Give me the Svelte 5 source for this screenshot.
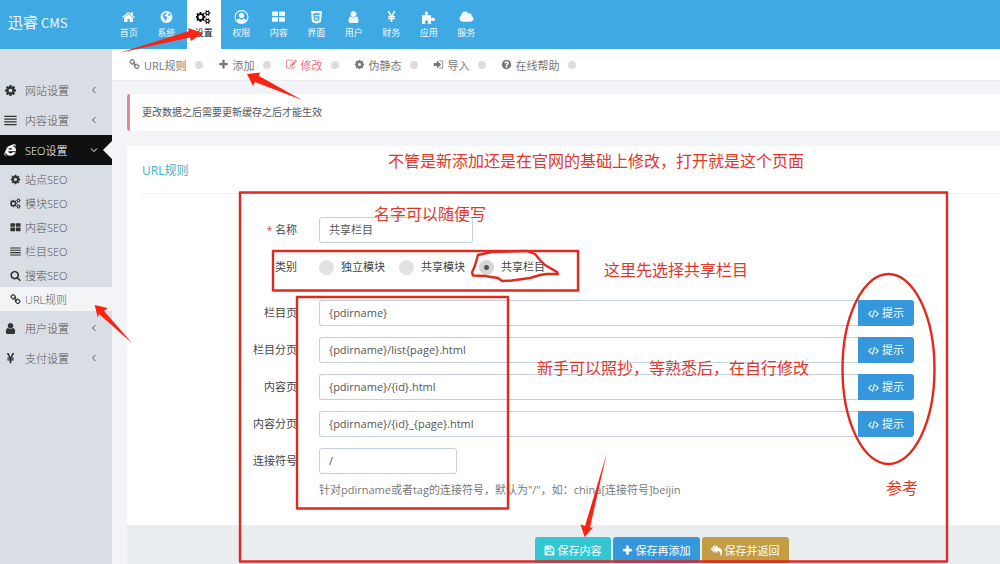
<script lang="ts">
  type Glyph = { w: number; d: string };

  const icons: Record<string, Glyph> = {
    home: {
      w: 1792,
      d: "M1472 992v480q0 26-19 45t-45 19h-384v-384h-256v384h-384q-26 0-45-19t-19-45v-480q0-1 .5-3t.5-3l575-474 575 474q1 2 1 6zm223-69l-62 74q-8 9-21 11h-3q-13 0-21-7l-692-577-692 577q-12 8-24 7-13-2-21-11l-62-74q-8-10-7-23.5t11-21.5l719-599q32-26 76-26t76 26l244 204v-195q0-14 9-23t23-9h192q14 0 23 9t9 23v408l219 182q10 8 11 21.5t-7 23.5z"
    },
    globe: {
      w: 1792,
      d: "M896 128a768 768 0 1 0 0 1536a768 768 0 1 0 0-1536zM640 380l150-60 150 20-20 130-120 60-30 110-140 30-20 110 130 20 110-10 130 100 20 130-110 90-60 160-90 110-90-120-20-170-130-150-80-190q20-220 220-370zM1200 390q190 100 250 280l-90 80-120-60-120 50-50-110 110-90z"
    },
    cogs: {
      w: 1920,
      d: "M832 896q0-106-75-181t-181-75-181 75-75 181 75 181 181 75 181-75 75-181zm768 512q0-52-38-90t-90-38-90 38-38 90q0 53 37.5 90.5t90.5 37.5 90.5-37.5 37.5-90.5zm0-1024q0-52-38-90t-90-38-90 38-38 90q0 53 37.5 90.5t90.5 37.5 90.5-37.5 37.5-90.5zm-384 421v185q0 10-7 19.5t-16 10.5l-155 24q-11 35-32 76 34 48 90 115 7 11 7 20 0 12-7 19-23 30-82.5 89.5t-78.5 59.5q-11 0-21-7l-115-90q-37 19-77 31-11 108-23 155-7 24-30 24h-186q-11 0-20-7.5t-10-17.5l-23-153q-34-10-75-31l-118 89q-7 7-20 7-11 0-21-8-144-133-144-160 0-9 7-19 10-14 41-53t47-61q-23-44-35-82l-152-24q-10-1-17-9.5t-7-19.5v-185q0-10 7-19.5t16-10.5l155-24q11-35 32-76-34-48-90-115-7-11-7-20 0-12 7-20 22-30 82-89t79-59q11 0 21 7l115 90q34-18 77-32 11-108 23-154 7-24 30-24h186q11 0 20 7.5t10 17.5l23 153q34 10 75 31l118-89q8-7 20-7 11 0 21 8 144 133 144 160 0 8-7 19-12 16-42 54t-45 60q23 48 34 82l152 23q10 2 17 10.5t7 19.5zm640 533v140q0 16-149 31-12 27-30 52 51 113 51 138 0 4-4 7-122 71-124 71-8 0-46-47t-52-68q-20 2-30 2t-30-2q-14 21-52 68t-46 47q-2 0-124-71-4-3-4-7 0-25 51-138-18-25-30-52-149-15-149-31v-140q0-16 149-31 13-29 30-52-51-113-51-138 0-4 4-7 4-2 35-20t59-34 30-16q8 0 46 46.5t52 67.5q20-2 30-2t30 2q51-71 92-112l6-2q4 0 124 70 4 3 4 7 0 25-51 138 17 23 30 52 149 15 149 31zm0-1024v140q0 16-149 31-12 27-30 52 51 113 51 138 0 4-4 7-122 71-124 71-8 0-46-47t-52-68q-20 2-30 2t-30-2q-14 21-52 68t-46 47q-2 0-124-71-4-3-4-7 0-25 51-138-18-25-30-52-149-15-149-31v-140q0-16 149-31 13-29 30-52-51-113-51-138 0-4 4-7 4-2 35-20t59-34 30-16q8 0 46 46.5t52 67.5q20-2 30-2t30 2q51-71 92-112l6-2q4 0 124 70 4 3 4 7 0 25-51 138 17 23 30 52 149 15 149 31z"
    },
    account: {
      w: 1792,
      d: "M896 0a896 896 0 1 0 0 1792a896 896 0 1 0 0-1792zM896 150a746 746 0 0 1 590 1202q-60-220-250-250q-140 130-340 130t-340-130q-190 30-250 250a746 746 0 0 1 590-1202zM896 360a340 340 0 1 0 0 680a340 340 0 1 0 0-680z"
    },
    grid: {
      w: 1792,
      d: "M128 192h640q64 0 64 64v448q0 64-64 64h-640q-64 0-64-64v-448q0-64 64-64zM1024 192h640q64 0 64 64v448q0 64-64 64h-640q-64 0-64-64v-448q0-64 64-64zM128 912h640q64 0 64 64v448q0 64-64 64h-640q-64 0-64-64v-448q0-64 64-64zM1024 912h640q64 0 64 64v448q0 64-64 64h-640q-64 0-64-64v-448q0-64 64-64z"
    },
    html5: {
      w: 1792,
      d: "M192 128h1408l-128 1410-576 190-576-190zM490 420l46 560h560l-22 210-178 50-178-50-12-130h-170l24 260 336 100 338-100 46-510h-590l-14-180h620l18-210z"
    },
    user: {
      w: 1792,
      d: "M1536 1399q0 109-62.5 187t-150.5 78h-854q-88 0-150.5-78t-62.5-187q0-85 8.5-160.5t31.5-152 58.5-131 94-89 134.5-34.5q131 128 313 128t313-128q76 0 134.5 34.5t94 89 58.5 131 31.5 152 8.5 160.5zm-256-887q0 159-112.5 271.5t-271.5 112.5-271.5-112.5-112.5-271.5 112.5-271.5 271.5-112.5 271.5 112.5 112.5 271.5z"
    },
    yen: {
      w: 1792,
      d: "M985.5 1536h-172q-13 0-22.5-9t-9.5-23v-330h-288q-13 0-22.5-9t-9.5-23v-103q0-13 9.5-22.5t22.5-9.5h288v-85h-288q-13 0-22.5-9t-9.5-23v-104q0-13 9.5-22.5t22.5-9.5h214l-321-578q-8-16 0-32 10-16 28-16h194q19 0 29 18l215 425q19 38 56 125 10-24 30.5-68t27.5-61l191-420q8-19 29-19h191q17 0 27 16 9 14 1 31l-313 579h215q13 0 22.5 9.5t9.5 22.5v104q0 14-9.5 23t-22.5 9h-290v85h290q13 0 22.5 9.5t9.5 22.5v103q0 14-9.5 23t-22.5 9h-290v330q0 13-9.5 22.5t-22.5 9.5z"
    },
    puzzle: {
      w: 1792,
      d: "M64 640q150 30 320 20 130-10 120-90-70-90-70-190 0-190 200-200 210 10 210 200 0 100-80 200 0 80 130 80 180 0 340-30-20 150-20 300 10 130 100 110 80-70 190-70 220 10 220 230 0 210-210 220-110 0-200-80-100-20-100 110 0 140 30 300-200 30-380 20-110-10-110-100 90-90 80-190-10-170-200-180-190 10-200 180 0 110 70 200 0 90-120 100-160 10-320-30z"
    },
    cloud: {
      w: 2048,
      d: "M1984 1152q0 159-112.5 271.5t-271.5 112.5h-1088q-185 0-316.5-131.5t-131.5-316.5q0-132 71-241.5t187-163.5q-2-28-2-43 0-212 150-362t362-150q158 0 286.5 88t187.5 230q70-62 166-62 106 0 181 75t75 181q0 75-41 138 129 30 213 134.5t84 239.5z"
    },
    cog: {
      w: 1792,
      d: "M1152 896q0-106-75-181t-181-75-181 75-75 181 75 181 181 75 181-75 75-181zm512-109v222q0 12-8 23t-20 13l-185 28q-19 54-39 91 35 50 107 138 10 12 10 25t-9 23q-27 37-99 108t-94 71q-12 0-26-9l-138-108q-44 23-91 38-16 136-29 186-7 28-36 28h-222q-14 0-24.5-8.5t-11.5-21.5l-28-184q-49-16-90-37l-141 107q-10 9-25 9-14 0-25-11-126-114-165-168-7-10-7-23 0-12 8-23 15-21 51-66.5t54-70.5q-27-50-41-99l-183-27q-13-2-21-12.5t-8-23.5v-222q0-12 8-23t19-13l186-28q14-46 39-92-40-57-107-138-10-12-10-24 0-10 9-23 26-36 98.5-107.5t94.5-71.5q13 0 26 10l138 107q44-23 91-38 16-136 29-186 7-28 36-28h222q14 0 24.5 8.5t11.5 21.5l28 184q49 16 90 37l142-107q9-9 24-9 13 0 25 10 129 119 165 170 7 8 7 22 0 12-8 23-15 21-51 66.5t-54 70.5q26 50 41 98l183 28q13 2 21 12.5t8 23.5z"
    },
    lines: {
      w: 1792,
      d: "M40 230h1712v180h-1712zM40 610h1712v180h-1712zM40 990h1712v180h-1712zM40 1370h1712v180h-1712z"
    },
    ie: {
      w: 1792,
      d: "M1660 1010h-1080q20 270 310 280 190 0 270-150h450q-150 470-710 480-280 0-450-110-260 130-370 20-110-150 90-540 200-370 530-640-250 110-450 380 130-480 640-540 350-150 570-140 260 60 150 370-20-210-190-200-110 10-230 70 510 200 470 720zM590 760h580q-20-210-280-220-260 10-300 220zM230 1170q-160 390 90 350 70-10 130-50-170-120-220-300z"
    },
    search: {
      w: 1792,
      d: "M1216 832q0-185-131.5-316.5t-316.5-131.5-316.5 131.5-131.5 316.5 131.5 316.5 316.5 131.5 316.5-131.5 131.5-316.5zm512 832q0 52-38 90t-90 38q-54 0-90-38l-343-342q-179 124-399 124-143 0-273.5-55.5t-225-150-150-225-55.5-273.5 55.5-273.5 150-225 225-150 273.5-55.5 273.5 55.5 225 150 150 225 55.5 273.5q0 220-124 399l343 343q37 37 37 90z"
    },
    link: {
      w: 1792,
      d: "M1520 1216q0-40-28-68l-208-208q-28-28-68-28-42 0-72 32 3 3 19 18.5t21.5 21.5 15 19 13 25.5 3.5 27.5q0 40-28 68t-68 28q-15 0-27.5-3.5t-25.5-13-19-15-21.5-21.5-18.5-19q-33 31-33 73 0 40 28 68l206 207q27 27 68 27 40 0 68-26l147-146q28-28 28-67zm-703-705q0-40-28-68l-206-207q-28-28-68-28-39 0-68 27l-147 146q-28 28-28 67 0 40 28 68l208 208q27 27 68 27 42 0 72-31-3-3-19-18.5t-21.5-21.5-15-19-13-25.5-3.5-27.5q0-40 28-68t68-28q15 0 27.5 3.5t25.5 13 19 15 21.5 21.5 18.5 19q33-31 33-73zm895 705q0 120-85 203l-147 146q-83 83-203 83-121 0-204-85l-206-207q-83-83-83-203 0-123 88-209l-88-88q-86 88-208 88-120 0-204-84l-208-208q-84-84-84-204t85-203l147-146q83-83 203-83 121 0 204 85l206 207q83 83 83 203 0 123-88 209l88 88q86-88 208-88 120 0 204 84l208 208q84 84 84 204z"
    },
    plus: {
      w: 1792,
      d: "M1600 736v192q0 40-28 68t-68 28h-416v416q0 40-28 68t-68 28h-192q-40 0-68-28t-28-68v-416h-416q-40 0-68-28t-28-68v-192q0-40 28-68t68-28h416v-416q0-40 28-68t68-28h192q40 0 68 28t28 68v416h416q40 0 68 28t28 68z"
    },
    edit: {
      w: 1792,
      d: "M888 1184l116-116-152-152-116 116v56h96v96h56zm440-720q-16-16-33 1l-350 350q-17 17-1 33t33-1l350-350q17-17 1-33zm80 594v190q0 119-84.5 203.5t-203.5 84.5h-832q-119 0-203.5-84.5t-84.5-203.5v-832q0-119 84.5-203.5t203.5-84.5h832q63 0 117 25 15 7 18 23 3 17-9 29l-49 49q-14 14-32 8-23-6-45-6h-832q-66 0-113 47t-47 113v832q0 66 47 113t113 47h832q66 0 113-47t47-113v-126q0-13 9-22l64-64q15-15 35-7t20 29zm-96-738l288 288-672 672h-288v-288zm444 132l-92 92-288-288 92-92q28-28 68-28t68 28l152 152q28 28 28 68t-28 68z"
    },
    signin: {
      w: 1792,
      d: "M1312 896q0 26-19 45l-544 544q-19 19-45 19t-45-19-19-45v-288h-448q-26 0-45-19t-19-45v-384q0-26 19-45t45-19h448v-288q0-26 19-45t45-19 45 19l544 544q19 19 19 45zm352-352v704q0 119-84.5 203.5t-203.5 84.5h-320q-13 0-22.5-9.5t-9.5-22.5q0-4-1-20t-.5-26.5 3-23.5 10-19.5 20.5-6.5h320q66 0 113-47t47-113v-704q0-66-47-113t-113-47h-312l-11.5-1-11.5-3-8-5.5-7-9-2-13.5q0-4-1-20t-.5-26.5 3-23.5 10-19.5 20.5-6.5h320q119 0 203.5 84.5t84.5 203.5z"
    },
    help: {
      w: 1792,
      d: "M1024 1376v-192q0-14-9-23t-23-9h-192q-14 0-23 9t-9 23v192q0 14 9 23t23 9h192q14 0 23-9t9-23zm256-672q0-88-55.5-163t-138.5-116-170-41q-243 0-371 213-15 24 8 42l132 100q7 6 19 6 16 0 25-12 53-68 86-92 34-24 86-24 48 0 85.5 26t37.5 59q0 38-20 61t-68 45q-63 28-115.5 86.5t-52.5 125.5v36q0 14 9 23t23 9h192q14 0 23-9t9-23q0-19 21.5-49.5t54.5-49.5q32-18 49-28.5t46-35 44.5-48 28-60.5 12.5-81zm384 192q0 209-103 385.5t-279.5 279.5-385.5 103-385.5-103-279.5-279.5-103-385.5 103-385.5 279.5-279.5 385.5-103 385.5 103 279.5 279.5 103 385.5z"
    },
    code: {
      w: 1920,
      d: "M617 1399l-50 50q-10 10-23 10t-23-10l-466-466q-10-10-10-23t10-23l466-466q10-10 23-10t23 10l50 50q10 10 10 23t-10 23l-393 393 393 393q10 10 10 23t-10 23zm591-1067l-373 1291q-4 13-15.5 19.5t-23.5 2.5l-62-17q-13-4-19.5-15.5t-2.5-24.5l373-1291q4-13 15.5-19.5t23.5-2.5l62 17q13 4 19.5 15.5t2.5 24.5zm657 651l-466 466q-10 10-23 10t-23-10l-50-50q-10-10-10-23t10-23l393-393-393-393q-10-10-10-23t10-23l50-50q10-10 23-10t23 10l466 466q10 10 10 23t-10 23z"
    },
    save: {
      w: 1792,
      d: "M512 1536h768v-384h-768v384zm896 0h128v-896q0-14-10-38.5t-20-34.5l-281-281q-10-10-34-20t-39-10v416q0 40-28 68t-68 28h-576q-40 0-68-28t-28-68v-416h-128v1280h128v-416q0-40 28-68t68-28h832q40 0 68 28t28 68v416zm-384-928v-320q0-13-9.5-22.5t-22.5-9.5h-192q-13 0-22.5 9.5t-9.5 22.5v320q0 13 9.5 22.5t22.5 9.5h192q13 0 22.5-9.5t9.5-22.5zm640 32v928q0 40-28 68t-68 28h-1344q-40 0-68-28t-28-68v-1344q0-40 28-68t68-28h928q40 0 88 20t76 48l280 280q28 28 48 76t20 88z"
    },
    replyAll: {
      w: 1792,
      d: "M640 1082v70q0 42-39 59-13 5-25 5-27 0-45-19l-512-512q-19-19-19-45t19-45l512-512q29-31 70-14 39 17 39 59v69l-397 398q-19 19-19 45t19 45zm1152 70q0 58-17 133.5t-38.5 138-48 125-40.5 90.5l-20 40q-8 17-28 17-6 0-9-1-25-8-23-34 43-400-106-565-64-71-170.5-110.5t-267.5-52.5v251q0 42-39 59-13 5-25 5-27 0-45-19l-512-512q-19-19-19-45t19-45l512-512q29-31 70-14 39 17 39 59v262q411 28 599 221 169 173 169 509z"
    }
  };

  const topMenu = [
    { icon: "home", label: "首页" },
    { icon: "globe", label: "系统" },
    { icon: "cogs", label: "设置", active: true },
    { icon: "account", label: "权限" },
    { icon: "grid", label: "内容" },
    { icon: "html5", label: "界面" },
    { icon: "user", label: "用户" },
    { icon: "yen", label: "财务" },
    { icon: "puzzle", label: "应用" },
    { icon: "cloud", label: "服务" }
  ];

  const sideMenu = [
    { icon: "cog", label: "网站设置" },
    { icon: "lines", label: "内容设置" },
    {
      icon: "ie",
      label: "SEO设置",
      children: [
        { icon: "cog", label: "站点SEO" },
        { icon: "cogs", label: "模块SEO" },
        { icon: "grid", label: "内容SEO" },
        { icon: "lines", label: "栏目SEO" },
        { icon: "search", label: "搜索SEO" },
        { icon: "link", label: "URL规则", active: true }
      ]
    },
    { icon: "user", label: "用户设置" },
    { icon: "yen", label: "支付设置" }
  ];

  const actions = [
    { icon: "link", label: "URL规则" },
    { icon: "plus", label: "添加" },
    { icon: "edit", label: "修改", active: true },
    { icon: "cog", label: "伪静态" },
    { icon: "signin", label: "导入" },
    { icon: "help", label: "在线帮助" }
  ];

  const types = ["独立模块", "共享模块", "共享栏目"];

  let name = $state("共享栏目");
  let type = $state("共享栏目");
  let separator = $state("/");
  let rules = $state([
    { id: "list", label: "栏目页", value: "{pdirname}" },
    { id: "list_page", label: "栏目分页", value: "{pdirname}/list{page}.html" },
    { id: "show", label: "内容页", value: "{pdirname}/{id}.html" },
    { id: "show_page", label: "内容分页", value: "{pdirname}/{id}_{page}.html" }
  ]);
</script>

{#snippet icon(key: string)}
  <svg class="icon" viewBox="0 0 {icons[key].w} 1792" aria-hidden="true">
    <path fill-rule="evenodd" d={icons[key].d} />
  </svg>
{/snippet}

<div class="page">
  <header>
    <a class="brand" href="#home"><span>迅睿</span> CMS</a>
    <nav class="top-menu">
      {#each topMenu as item (item.label)}
        <a href="#top" class:active={item.active}>
          {@render icon(item.icon)}
          <span>{item.label}</span>
        </a>
      {/each}
    </nav>
  </header>

  <div class="body">
    <aside>
      <ul class="side-menu">
        {#each sideMenu as item (item.label)}
          <li>
            <a href="#side" class="side-link" class:open={item.children}>
              {@render icon(item.icon)}
              <span>{item.label}</span>
              <svg class="chevron" viewBox="0 0 8 8" aria-hidden="true">
                <path d={item.children ? "M1 2.5l3 3 3-3" : "M5.5 1l-3 3 3 3"} />
              </svg>
            </a>
            {#if item.children}
              <ul class="sub-menu">
                {#each item.children as child (child.label)}
                  <li>
                    <a href="#sub" class:active={child.active}>
                      {@render icon(child.icon)}
                      <span>{child.label}</span>
                    </a>
                  </li>
                {/each}
              </ul>
            {/if}
          </li>
        {/each}
      </ul>
    </aside>

    <main>
      <nav class="actions">
        {#each actions as item (item.label)}
          <a href="#action" class:active={item.active}>
            {@render icon(item.icon)}
            <span>{item.label}</span>
          </a>
          <i class="dot"></i>
        {/each}
      </nav>

      <div class="content">
        <p class="note">更改数据之后需要更新缓存之后才能生效</p>

        <form class="portlet" onsubmit={(e) => e.preventDefault()}>
          <h2>URL规则</h2>

          <div class="form-body">
            <div class="row">
              <label for="name"><em>*</em> 名称</label>
              <div><input id="name" class="text name" type="text" bind:value={name} /></div>
            </div>

            <div class="row types" role="radiogroup" aria-labelledby="type-label">
              <span id="type-label" class="label">类别</span>
              <div class="radios">
                {#each types as t (t)}
                  <label>
                    <input type="radio" name="type" value={t} bind:group={type} />
                    {t}
                  </label>
                {/each}
              </div>
            </div>

            {#each rules as rule (rule.id)}
              <div class="row">
                <label for={rule.id}>{rule.label}</label>
                <div class="input-group">
                  <input id={rule.id} class="text" type="text" bind:value={rule.value} />
                  <button type="button">{@render icon("code")} 提示</button>
                </div>
              </div>
            {/each}

            <div class="row">
              <label for="separator">连接符号</label>
              <div>
                <input id="separator" class="text separator" type="text" bind:value={separator} />
                <p class="help">针对pdirname或者tag的连接符号，默认为"/"，如：china[连接符号]beijin</p>
              </div>
            </div>
          </div>

          <div class="form-actions">
            <button type="submit" class="green">{@render icon("save")} 保存内容</button>
            <button type="button" class="blue">{@render icon("plus")} 保存再添加</button>
            <button type="button" class="gold">{@render icon("replyAll")} 保存并返回</button>
          </div>
        </form>
      </div>
    </main>
  </div>

  <!-- hand-drawn marks over the page -->
  <svg class="marks" width="1000" height="564" viewBox="0 0 1000 564">
    <g class="stroke">
      <rect x="240" y="192.5" width="707" height="369" />
      <rect x="273" y="251" width="305" height="39.5" />
      <rect x="297" y="297" width="211" height="211.5" />
      <ellipse cx="888.5" cy="369" rx="46" ry="95" />
      <path d="M478 255l14-3 35-1 8 3 5 6 5 5 12 7 1 2-11 0-7 1-10 3-18 2.5-10 .5-4-3-13-2-12-.5-1-3 3-7z" />
    </g>
    <g class="arrow">
      <path d="M119 53L189 31l-1-3 15 5-12 8-1-3.5z" />
      <path d="M247 74l13-1.5-1 3.5 43 24-47-18-2 4z" />
      <path d="M94.7 305l13 3-3.7 3 28.7 32.7L99 314l-1.3 3.7z" />
      <path d="M606.7 453.5L590 527.5h3L584.5 537l-4-12.7 4.5 1.7z" />
    </g>
    <text x="388" y="167">不管是新添加还是在官网的基础上修改，打开就是这个页面</text>
    <text x="374" y="220">名字可以随便写</text>
    <text x="604" y="276">这里先选择共享栏目</text>
    <text x="537" y="374">新手可以照抄，等熟悉后，在自行修改</text>
    <text x="886" y="494">参考</text>
  </svg>
</div>

<style>
  :global(body) {
    margin: 0;
  }
  .page {
    position: relative;
    display: flex;
    flex-direction: column;
    min-height: 100vh;
    overflow: hidden;
    background: #f3f4f7;
    color: #555;
    font-family: "Open Sans", "Noto Sans CJK SC", sans-serif;
    font-size: 11px;
  }
  a {
    color: inherit;
    text-decoration: none;
  }
  ul {
    list-style: none;
    margin: 0;
    padding: 0;
  }
  button,
  input {
    font: inherit;
    box-sizing: border-box;
  }
  .icon {
    width: 11px;
    height: 11px;
    flex: none;
    fill: currentColor;
  }

  header {
    display: flex;
    height: 49px;
    background: #3fa9e3;
    color: #f2f9fd;
  }
  .brand {
    box-sizing: border-box;
    width: 110px;
    padding-left: 8px;
    font-family: "Noto Sans CJK SC", sans-serif;
    font-size: 13px;
    line-height: 43px;
  }
  .brand span {
    font-family: KaiTi, STKaiti, "Noto Sans CJK SC", sans-serif;
    font-size: 15px;
  }
  .top-menu {
    display: grid;
    grid-template-columns: repeat(10, 1fr);
    width: 375px;
  }
  .top-menu a {
    display: flex;
    flex-direction: column;
    align-items: center;
    gap: 2px;
    margin: 0 2px;
    padding-top: 10px;
    font-size: 9px;
    line-height: 14px;
  }
  .top-menu .icon {
    width: 15px;
    height: 14px;
  }
  .top-menu .active {
    background: #fff;
    color: #111;
  }

  .body {
    display: flex;
    flex: 1;
  }
  aside {
    flex: none;
    width: 112px;
    padding-top: 26px;
    box-sizing: border-box;
    background: #d9dee5;
  }
  .side-link {
    position: relative;
    display: flex;
    align-items: center;
    height: 30px;
    padding: 0 14px 0 4px;
    font-weight: 300;
  }
  .side-link span {
    flex: 1;
    margin-left: 8px;
  }
  aside .icon {
    color: #333;
  }
  .side-link .icon {
    width: 13px;
    height: 13px;
  }
  .chevron {
    width: 8px;
    height: 8px;
    fill: none;
    stroke: currentColor;
  }
  .side-link.open {
    background: #0e0f11;
    color: #fff;
  }
  .side-link.open .icon {
    color: #fff;
  }
  .side-link.open::after {
    content: "";
    position: absolute;
    top: 6px;
    right: 0;
    border: 9px solid transparent;
    border-left: 0;
    border-right-color: #f3f4f7;
  }
  .sub-menu {
    padding: 2px 0;
  }
  .sub-menu a {
    display: flex;
    align-items: center;
    gap: 4px;
    height: 24px;
    padding-left: 10px;
    font-weight: 300;
  }
  .sub-menu .active {
    background: #f3f4f6;
  }

  main {
    display: flex;
    flex-direction: column;
    flex: 1;
    min-width: 0;
  }
  .actions {
    display: flex;
    align-items: center;
    height: 31px;
    padding-left: 17px;
    background: #fff;
    border-bottom: 1px solid #e9ebee;
    color: #777;
  }
  .actions a {
    display: flex;
    align-items: center;
    gap: 4px;
  }
  .actions .active {
    color: #e7747f;
  }
  .dot {
    width: 8px;
    height: 8px;
    margin: 0 15px 0 8px;
    border-radius: 50%;
    background: #ddd;
  }
  .content {
    display: flex;
    flex-direction: column;
    flex: 1;
    padding: 13px 0 0 15px;
  }
  .note {
    margin: 0 0 15px;
    padding-left: 12px;
    border-left: 3px solid #e8858e;
    border-radius: 3px 0 0 3px;
    background: #fff;
    font-size: 10px;
    line-height: 37px;
  }
  .portlet {
    display: flex;
    flex-direction: column;
    flex: 1;
    background: #fff;
    border-radius: 3px 0 0 0;
  }
  h2 {
    margin: 0 0 0 15px;
    border-bottom: 1px solid #eef1f5;
    color: #3fb5bf;
    font-size: 12px;
    font-weight: 400;
    line-height: 49px;
    height: 47px;
  }
  .form-body {
    display: flex;
    flex-direction: column;
    gap: 11px;
    padding: 23px 86px 25px 15px;
  }
  .row {
    display: grid;
    grid-template-columns: 155px 1fr;
    column-gap: 22px;
    line-height: 26px;
    color: #444;
  }
  .row > label,
  .label {
    text-align: right;
  }
  em {
    color: #e73d4a;
    font-size: 10px;
    font-style: normal;
  }
  .types {
    min-height: 35px;
  }
  .radios {
    display: flex;
    align-items: flex-start;
    gap: 14px;
  }
  .radios label {
    display: flex;
    align-items: center;
    gap: 7px;
  }
  .radios input {
    appearance: none;
    width: 15px;
    height: 15px;
    margin: 0;
    border-radius: 50%;
    background: #e2e2e2;
  }
  .radios input:checked {
    background: radial-gradient(circle, #555 0 2px, #d4d4d4 3px);
  }
  .text {
    display: block;
    width: 100%;
    height: 26px;
    padding: 0 9px;
    border: 1px solid #c6cfda;
    border-radius: 3px;
    background: #fff;
    color: #555;
    outline: none;
  }
  .name {
    width: 154px;
  }
  .separator {
    width: 138px;
  }
  .input-group {
    display: flex;
  }
  .input-group .text {
    flex: 1;
    min-width: 0;
    border-right: 0;
    border-radius: 3px 0 0 3px;
  }
  button {
    display: flex;
    align-items: center;
    gap: 3px;
    height: 26px;
    padding: 0 9px;
    border: 0;
    border-radius: 3px;
    background: #3598dc;
    color: #fff;
    white-space: nowrap;
  }
  button .icon {
    stroke: currentColor;
    stroke-width: 60;
  }
  .input-group button {
    padding: 0 10px;
    border-radius: 0 3px 3px 0;
  }
  .help {
    margin: 6px 0 0;
    color: #777;
    line-height: 20px;
  }
  .form-actions {
    display: flex;
    flex: 1;
    justify-content: center;
    gap: 2px;
    padding: 12px 0 0 196px;
    background: #ebeef0;
  }
  .green {
    background: #32c5d2;
  }
  .gold {
    background: #c29d46;
  }

  .marks {
    position: absolute;
    top: 0;
    left: 0;
    pointer-events: none;
  }
  .stroke {
    fill: none;
    stroke: #e3281e;
    stroke-width: 2.4;
    stroke-linejoin: round;
  }
  .arrow {
    fill: #fb2414;
  }
  .marks text {
    fill: #e2362b;
    font-family: "Noto Sans CJK SC", sans-serif;
    font-size: 16px;
  }
</style>
